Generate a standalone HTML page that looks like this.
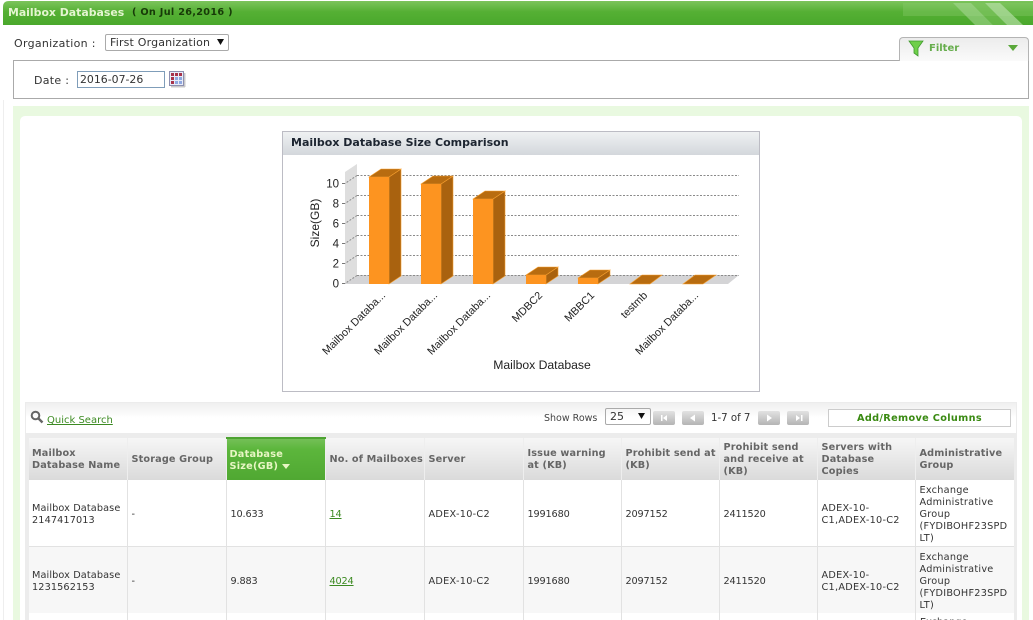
<!DOCTYPE html>
<html><head><meta charset="utf-8"><style>
html,body{margin:0;padding:0;background:#fff;width:1033px;height:620px;overflow:hidden}
body{position:relative;font-family:"DejaVu Sans","Liberation Sans",sans-serif;font-size:10px;color:#333}
.a{position:absolute;white-space:nowrap}
table{position:absolute;left:29px;top:437px;width:985px;border-collapse:collapse;table-layout:fixed;font-size:9.7px;line-height:12px}
th{height:40px;padding:2px 0 0 4px;text-align:left;font-weight:bold;color:#666;background:linear-gradient(#f6f6f6,#dadada);border-left:1px solid #eee;font-size:9.7px;letter-spacing:.15px;white-space:nowrap;overflow:hidden}
td{height:63px;padding:3px 0 0 4px;border-left:1px solid #e2e2e2;border-bottom:1px solid #e2e2e2;color:#333;background:#fff;letter-spacing:.12px}
td.n{letter-spacing:-.15px}
td.x{letter-spacing:.28px}
td.l{letter-spacing:.25px}
tr.e td{background:#f7f7f7}
th.s{background:linear-gradient(#74c057 0,#5cb63c 25%,#50a832 100%);color:#e8f6c4;border-top:2px solid #4ea332;height:38px;padding-left:3px;letter-spacing:.25px}
td a{color:#3c8a22;text-decoration:underline}
</style></head><body>

<svg class="a" style="left:0;top:0" width="1033" height="26">
<defs><linearGradient id="g" x1="0" y1="0" x2="0" y2="1"><stop offset="0" stop-color="#7cc45c"/><stop offset=".45" stop-color="#55b034"/><stop offset="1" stop-color="#4aa82c"/></linearGradient></defs>
<path d="M3 25V7Q3 1 9 1H1033V25Z" fill="url(#g)"/>
<rect x="903" y="3" width="130" height="13" fill="#8ccb70" opacity=".35"/>
<polygon points="953,3 971,3 993,25 975,25" fill="#a9d897" opacity=".55"/>
<polygon points="971,3 985,3 1007,25 993,25" fill="#7ec35f" opacity=".5"/>
<polygon points="985,3 1000,3 1023,25 1007,25" fill="#b5deA5" opacity=".7"/>
</svg>
<div class="a" style="left:8px;top:6px;font-weight:bold;font-size:10.9px;color:#e4f5d0">Mailbox Databases</div>
<div class="a" style="left:132px;top:7px;font-weight:bold;font-size:9.7px;color:#173a08;letter-spacing:.3px">( On Jul 26,2016 )</div>

<div class="a" style="left:14px;top:37px;font-size:11px;letter-spacing:.3px">Organization :</div>
<div class="a" style="left:105px;top:34px;width:122px;height:15px;border:1px solid #aaa;border-radius:2px;font-size:11px;letter-spacing:.18px;line-height:16px;text-indent:4px">First Organization</div>
<svg class="a" style="left:216px;top:38px" width="9" height="8"><path d="M1 1H8L4.500 7Z" fill="#111"/></svg>

<div class="a" style="left:13px;top:60px;width:1014px;height:37px;border:1px solid #aaa"></div>
<div class="a" style="left:34px;top:74px;font-size:11px;letter-spacing:.3px">Date :</div>
<div class="a" style="left:77px;top:71px;width:86px;height:15px;border:1px solid #7f9db9;font-size:10.9px;line-height:16px;text-indent:2px">2016-07-26</div>
<svg class="a" style="left:169px;top:71px" width="17" height="17">
<rect x="0.500" y="0.500" width="14" height="14" fill="#e8ecf8" stroke="#8d8fb0"/><rect x="15" y="2" width="1.500" height="14" fill="#c8c8c8"/><rect x="2" y="15" width="14" height="1.500" fill="#c8c8c8"/>
<g fill="#a8324a"><rect x="2" y="2" width="3" height="3"/><rect x="6" y="2" width="3" height="3"/><rect x="10" y="2" width="3" height="3"/><rect x="2" y="6" width="3" height="3"/><rect x="2" y="10" width="3" height="3"/></g>
<g fill="#8fa8e0"><rect x="6" y="6" width="3" height="3"/><rect x="10" y="6" width="3" height="3"/><rect x="6" y="10" width="3" height="3"/><rect x="10" y="10" width="3" height="3"/></g>
</svg>

<div class="a" style="left:899px;top:37px;width:128px;height:23px;border:1px solid #b4b4b4;border-bottom:none;border-radius:4px 4px 0 0;background:linear-gradient(#ececec,#fafafa)"></div>
<svg class="a" style="left:908px;top:40px" width="16" height="17"><path d="M1 1H15L10 8V16L6 13V8Z" fill="#6fcf4a" stroke="#3f9a2c" stroke-width=".8"/></svg>
<div class="a" style="left:929px;top:43px;font-weight:bold;font-size:10px;color:#66ad4c">Filter</div>
<svg class="a" style="left:1007px;top:45px" width="12" height="7"><path d="M1 0H11L6 6Z" fill="#5aa83a"/></svg>

<div class="a" style="left:3px;top:100px;width:1px;height:520px;background:#eee"></div>
<div class="a" style="left:13px;top:106px;width:1016px;height:514px;background:#e9f9e0"></div>
<div class="a" style="left:20px;top:116px;width:1002px;height:504px;background:#fff;border-radius:5px 5px 0 0"></div>

<div class="a" style="left:282px;top:131px;width:476px;height:259px;border:1px solid #bcbcc4;background:#fff"></div>
<div class="a" style="left:283px;top:132px;width:476px;height:23px;background:linear-gradient(#eff1f2,#d3d7dc)"></div>
<div class="a" style="left:291px;top:136px;font-weight:bold;font-size:11px;color:#1c2430">Mailbox Database Size Comparison</div>

<svg class="a" style="left:283px;top:156px" width="476" height="234" viewBox="283 156 476 234" font-family="Liberation Sans, sans-serif" fill="#222">
<polygon points="345,172 357,164 357,275 345,284" fill="#dedede"/>
<polygon points="357,275 739,275 728,284 345,284" fill="#d4d4d6"/>
<g stroke="#8a8a8a" stroke-dasharray="2 1.500" fill="none">
<path d="M357 175.500H739M357 195.500H739M357 215.500H739M357 235.500H739M357 255.500H739M357 275.500H739"/>
<path d="M357 175.500L345 183.500M357 195.500L345 203.500M357 215.500L345 223.500M357 235.500L345 243.500M357 255.500L345 263.500M357 275.500L345 283.500"/>
</g>
<path d="M342 183.500H345M342 203.500H345M342 223.500H345M342 243.500H345M342 263.500H345M342 283.500H345" stroke="#777"/>
<g font-size="11.500" text-anchor="end"><text x="339" y="187.500">10</text><text x="339" y="207.500">8</text><text x="339" y="227.500">6</text><text x="339" y="247.500">4</text><text x="339" y="267.500">2</text><text x="339" y="287.500">0</text></g>
<text transform="translate(319 223) rotate(-90)" font-size="12" text-anchor="middle">Size(GB)</text>

<g stroke="#f7a030" stroke-width=".6">
<polygon points="389,177 401,169 401,276 389,284" fill="#a9620f"/><polygon points="369,177 381,169 401,169 389,177" fill="#b86c10"/><rect x="369" y="177" width="20" height="107" fill="#fd9420" stroke="none"/>
<polygon points="441,184 453,176 453,276 441,284" fill="#a9620f"/><polygon points="421,184 433,176 453,176 441,184" fill="#b86c10"/><rect x="421" y="184" width="20" height="100" fill="#fd9420" stroke="none"/>
<polygon points="493,199 505,191 505,276 493,284" fill="#a9620f"/><polygon points="473,199 485,191 505,191 493,199" fill="#b86c10"/><rect x="473" y="199" width="20" height="85" fill="#fd9420" stroke="none"/>
<polygon points="546,275 558,267 558,276 546,284" fill="#a9620f"/><polygon points="526,275 538,267 558,267 546,275" fill="#b86c10"/><rect x="526" y="275" width="20" height="9" fill="#fd9420" stroke="none"/>
<polygon points="598,278 610,270 610,276 598,284" fill="#a9620f"/><polygon points="578,278 590,270 610,270 598,278" fill="#b86c10"/><rect x="578" y="278" width="20" height="6" fill="#fd9420" stroke="none"/>
<polygon points="630,284 642,275 662,275 650,284" fill="#b86c10"/>
<polygon points="683,284 695,275 716,275 703,284" fill="#b86c10"/>
</g>

<g font-size="10.800" text-anchor="end">
<text transform="translate(386 296) rotate(-45)">Mailbox Databa...</text>
<text transform="translate(438 296) rotate(-45)">Mailbox Databa...</text>
<text transform="translate(491 296) rotate(-45)">Mailbox Databa...</text>
<text transform="translate(543 296) rotate(-45)">MDBC2</text>
<text transform="translate(595 296) rotate(-45)">MBBC1</text>
<text transform="translate(648 296) rotate(-45)">testmb</text>
<text transform="translate(699 296) rotate(-45)">Mailbox Databa...</text>
</g>
<text x="542" y="369" font-size="12.200" text-anchor="middle">Mailbox Database</text>
</svg>

<div class="a" style="left:25px;top:402px;width:992px;height:218px;background:#ececec"></div>
<div class="a" style="left:26px;top:403px;width:990px;height:30px;background:linear-gradient(#efefef 0,#fff 50%)"></div>

<svg class="a" style="left:30px;top:410px" width="14" height="14"><circle cx="5.500" cy="5.500" r="3.800" fill="none" stroke="#666" stroke-width="2"/><path d="M8.500 8.500L12.500 12.500" stroke="#666" stroke-width="2.400"/></svg>
<div class="a" style="left:47px;top:415px;color:#3c8a22;text-decoration:underline;font-size:10px">Quick Search</div>

<div class="a" style="left:544px;top:413px;font-size:9.500px;color:#444">Show Rows</div>
<div class="a" style="left:605px;top:408px;width:44px;height:15px;border:1px solid #aaa;border-radius:2px;font-size:11px;line-height:16px;text-indent:4px">25</div>
<svg class="a" style="left:637px;top:412px" width="10" height="8"><path d="M1 1H8L4.500 7Z" fill="#111"/></svg>

<svg class="a" style="left:653px;top:410px" width="160" height="16">
<defs><linearGradient id="b" x1="0" y1="0" x2="0" y2="1"><stop offset="0" stop-color="#e2e2e2"/><stop offset="1" stop-color="#b4b4b4"/></linearGradient></defs>
<rect x="0" y="1" width="22" height="14" rx="2" fill="url(#b)"/><rect x="29" y="1" width="22" height="14" rx="2" fill="url(#b)"/><rect x="105" y="1" width="22" height="14" rx="2" fill="url(#b)"/><rect x="134" y="1" width="22" height="14" rx="2" fill="url(#b)"/>
<g fill="#fff"><rect x="8" y="5" width="1.500" height="6"/><path d="M14 5V11L10 8Z"/><path d="M42 4.500V11.500L37 8Z"/><path d="M114 4.500V11.500L119 8Z"/><path d="M143 5V11L147 8Z"/><rect x="148" y="5" width="1.500" height="6"/></g>
</svg>
<div class="a" style="left:711px;top:413px;font-size:10.2px;color:#333">1-7 of 7</div>
<div class="a" style="left:828px;top:409px;width:181px;height:16px;border:1px solid #ccc;background:#fff;text-align:center;line-height:17px;font-weight:bold;font-size:9.700px;letter-spacing:.35px;color:#3a8a12">Add/Remove Columns</div>

<table>
<colgroup><col style="width:98px"><col style="width:99px"><col style="width:99px"><col style="width:99px"><col style="width:99px"><col style="width:98px"><col style="width:98px"><col style="width:98px"><col style="width:98px"><col style="width:99px"></colgroup>
<tr><th style="border-left:none;padding-left:3px">Mailbox<br>Database Name</th><th>Storage Group</th><th class="s">Database<br>Size(GB) <svg width="8" height="5"><path d="M0 0H8L4 5Z" fill="#e8f6c4"/></svg></th><th>No. of Mailboxes</th><th>Server</th><th>Issue warning<br>at (KB)</th><th>Prohibit send at<br>(KB)</th><th>Prohibit send<br>and receive at<br>(KB)</th><th>Servers with<br>Database<br>Copies</th><th>Administrative<br>Group</th></tr>
<tr><td style="border-left:none;padding-left:3px">Mailbox Database<br>2147417013</td><td>-</td><td class="n">10.633</td><td class="n"><a>14</a></td><td class="x">ADEX-10-C2</td><td class="n">1991680</td><td class="n">2097152</td><td class="n">2411520</td><td class="x">ADEX-10-<br>C1,ADEX-10-C2</td><td class="l">Exchange<br>Administrative<br>Group<br>(FYDIBOHF23SPD<br>LT)</td></tr>
<tr class="e"><td style="border-left:none;padding-left:3px">Mailbox Database<br>1231562153</td><td>-</td><td class="n">9.883</td><td class="n"><a>4024</a></td><td class="x">ADEX-10-C2</td><td class="n">1991680</td><td class="n">2097152</td><td class="n">2411520</td><td class="x">ADEX-10-<br>C1,ADEX-10-C2</td><td class="l">Exchange<br>Administrative<br>Group<br>(FYDIBOHF23SPD<br>LT)</td></tr>
</table>
<svg class="a" style="left:29px;top:613px" width="985" height="7" font-size="9.700" fill="#333" font-family="DejaVu Sans, sans-serif">
<rect width="985" height="7" fill="#fff"/>
<path d="M98.500 0V7M197.500 0V7M296.500 0V7M395.500 0V7M494.500 0V7M592.500 0V7M690.500 0V7M788.500 0V7M886.500 0V7" stroke="#e2e2e2"/>
<text x="891" y="12">Exchange</text>
</svg>
</body></html>
